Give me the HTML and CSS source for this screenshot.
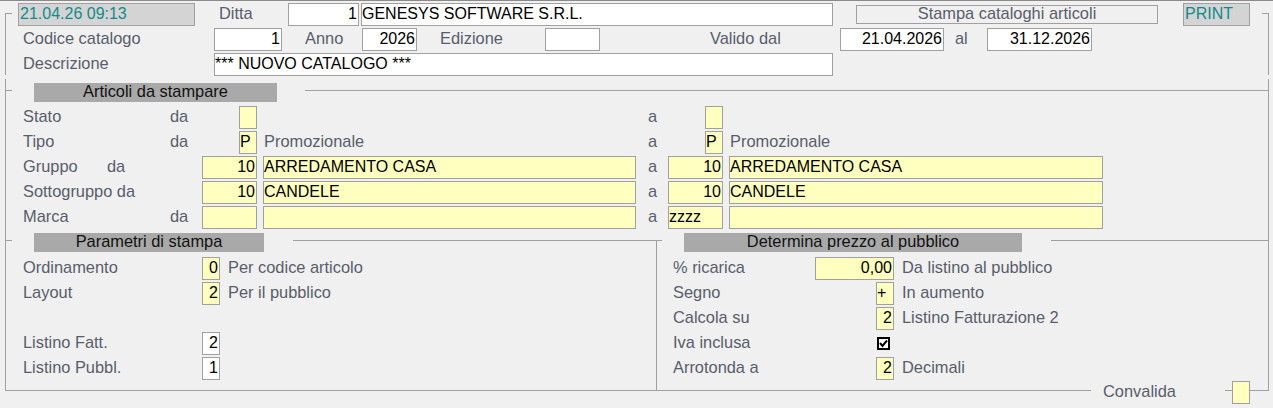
FILE: index.html
```html
<!DOCTYPE html>
<html lang="it">
<head>
    <meta charset="UTF-8">
    <meta name="viewport" content="width=device-width, initial-scale=1.0">
    <title>Stampa cataloghi articoli</title>
    <link rel="stylesheet" href="styles.css">
</head>
<body>
    <!-- Testata: ditta, catalogo, validita' -->
    <div class="testata">
        <div class="row">
            <div class="fld stamp w-stamp">21.04.26 09:13</div>
            <div class="lbl l-ditta">Ditta</div>
            <div class="fld num w-ditta">1</div>
            <div class="fld w-ragsoc">GENESYS SOFTWARE S.R.L.</div>
            <div class="banner">Stampa cataloghi articoli</div>
            <div class="fld stamp w-print">PRINT</div>
        </div>
        <div class="row">
            <div class="lbl l-first">Codice catalogo</div>
            <div class="fld num w-codcat">1</div>
            <div class="lbl l-anno">Anno</div>
            <div class="fld num w-anno">2026</div>
            <div class="lbl l-ediz">Edizione</div>
            <div class="fld w-anno"></div>
            <div class="lbl l-valido">Valido dal</div>
            <div class="fld num w-date">21.04.2026</div>
            <div class="lbl l-al">al</div>
            <div class="fld num w-date2">31.12.2026</div>
        </div>
        <div class="row">
            <div class="lbl l-first">Descrizione</div>
            <div class="fld w-descr">*** NUOVO CATALOGO ***</div>
        </div>
    </div>

    <div class="main">
        <!-- Selezione articoli -->
        <div class="group articoli">
            <div class="legend">
                <div class="legend-cover">
                    <div class="caption c-articoli">Articoli da stampare</div>
                </div>
            </div>
            <div class="rows">
                <div class="row">
                    <span class="lbl l-name">Stato</span><span class="lbl l-da">da</span>
                    <div class="code"><div class="fld yel small"></div></div>
                    <div class="desc"></div>
                    <span class="lbl l-a">a</span>
                    <div class="code"><div class="fld yel small"></div></div>
                    <div class="desc wide"></div>
                </div>
                <div class="row">
                    <span class="lbl l-name">Tipo</span><span class="lbl l-da">da</span>
                    <div class="code"><div class="fld yel small">P</div></div>
                    <div class="desc"><span class="lbl note">Promozionale</span></div>
                    <span class="lbl l-a">a</span>
                    <div class="code"><div class="fld yel small">P</div></div>
                    <div class="desc wide"><span class="lbl note">Promozionale</span></div>
                </div>
                <div class="row">
                    <span class="lbl l-name-short">Gruppo</span><span class="lbl l-da-long">da</span>
                    <div class="code"><div class="fld yel num full">10</div></div>
                    <div class="desc"><div class="fld yel full">ARREDAMENTO CASA</div></div>
                    <span class="lbl l-a">a</span>
                    <div class="code"><div class="fld yel num full">10</div></div>
                    <div class="desc wide"><div class="fld yel full">ARREDAMENTO CASA</div></div>
                </div>
                <div class="row">
                    <span class="lbl l-art">Sottogruppo da</span>
                    <div class="code"><div class="fld yel num full">10</div></div>
                    <div class="desc"><div class="fld yel full">CANDELE</div></div>
                    <span class="lbl l-a">a</span>
                    <div class="code"><div class="fld yel num full">10</div></div>
                    <div class="desc wide"><div class="fld yel full">CANDELE</div></div>
                </div>
                <div class="row">
                    <span class="lbl l-name">Marca</span><span class="lbl l-da">da</span>
                    <div class="code"><div class="fld yel full"></div></div>
                    <div class="desc"><div class="fld yel full"></div></div>
                    <span class="lbl l-a">a</span>
                    <div class="code"><div class="fld yel full">zzzz</div></div>
                    <div class="desc wide"><div class="fld yel full"></div></div>
                </div>
            </div>
        </div>

        <div class="split">
            <!-- Parametri di stampa -->
            <div class="group parametri">
                <div class="legend">
                    <div class="legend-cover">
                        <div class="caption c-parametri">Parametri di stampa</div>
                    </div>
                </div>
                <div class="rows">
                    <div class="row">
                        <span class="lbl l-art">Ordinamento</span>
                        <div class="fld yel num small">0</div>
                        <span class="lbl note after">Per codice articolo</span>
                    </div>
                    <div class="row">
                        <span class="lbl l-art">Layout</span>
                        <div class="fld yel num small">2</div>
                        <span class="lbl note after">Per il pubblico</span>
                    </div>
                    <div class="row"></div>
                    <div class="row">
                        <span class="lbl l-art">Listino Fatt.</span>
                        <div class="fld num small">2</div>
                    </div>
                    <div class="row">
                        <span class="lbl l-art">Listino Pubbl.</span>
                        <div class="fld num small">1</div>
                    </div>
                </div>
            </div>

            <!-- Determina prezzo al pubblico -->
            <div class="group prezzo">
                <div class="legend">
                    <div class="legend-cover cover-prezzo">
                        <div class="caption c-prezzo">Determina prezzo al pubblico</div>
                    </div>
                </div>
                <div class="rows">
                    <div class="row">
                        <span class="lbl l-det">% ricarica</span>
                        <div class="code-wide"><div class="fld yel num full">0,00</div></div>
                        <span class="lbl note after">Da listino al pubblico</span>
                    </div>
                    <div class="row">
                        <span class="lbl l-det">Segno</span>
                        <div class="code-wide"><div class="fld yel small">+</div></div>
                        <span class="lbl note after">In aumento</span>
                    </div>
                    <div class="row">
                        <span class="lbl l-det">Calcola su</span>
                        <div class="code-wide"><div class="fld yel num small">2</div></div>
                        <span class="lbl note after">Listino Fatturazione 2</span>
                    </div>
                    <div class="row">
                        <span class="lbl l-det">Iva inclusa</span>
                        <div class="code-wide">
                            <svg class="check" width="13" height="13" viewBox="0 0 13 13">
                                <rect x="1" y="1" width="11" height="11" fill="#fff" stroke="#000" stroke-width="2"/>
                                <polyline points="3,6 5.5,9 10,3.5" fill="none" stroke="#000" stroke-width="2"/>
                            </svg>
                        </div>
                    </div>
                    <div class="row">
                        <span class="lbl l-det">Arrotonda a</span>
                        <div class="code-wide"><div class="fld yel num small">2</div></div>
                        <span class="lbl note after">Decimali</span>
                    </div>
                </div>
            </div>
        </div>
    </div>

    <div class="footer">
        <div class="lbl conv-cover">Convalida</div>
        <div class="fld yel small conv-box"></div>
    </div>
</body>
</html>
```

FILE: styles.css
```css
* {
    box-sizing: border-box;
}
body {
    margin: 0;
    height: 408px;
    overflow: hidden;
    background: #f0f0f0;
    border-top: 1px solid #8a8a8a;
    font-family: "Liberation Sans", Arial, sans-serif;
    font-size: 16px;
    color: #000;
}
.row {
    display: flex;
    align-items: flex-start;
    height: 25px;
}
.lbl {
    flex: none;
    height: 23px;
    line-height: 21px;
    font-size: 16.4px;
    color: #585d6c;
    white-space: nowrap;
}
.fld {
    flex: none;
    height: 23px;
    line-height: 20px;
    border: 1px solid #a0a0a0;
    background: #fff;
    white-space: nowrap;
    overflow: hidden;
}
.fld.num {
    text-align: right;
    padding-right: 1px;
}
.fld.yel {
    background: #ffffc0;
}
.fld.small {
    width: 18px;
}
.fld.full {
    width: 100%;
}
.fld.stamp {
    background: #d4d4d4;
    color: #138a8a;
    padding-left: 1px;
}

/* testata */
.testata {
    height: 62px;
    margin: 12px 4px 0 5px;
    border: 1px solid #a0a0a0;
    border-bottom: none;
}
.testata .row {
    margin: 0 6px;
    background: #f0f0f0;
}
.testata .row:first-child {
    margin-top: -11px;
}
.w-stamp { width: 177px; margin-left: 6px; }
.w-ditta { width: 71px; }
.w-ragsoc { width: 472px; margin-left: 2px; }
.w-print { width: 67px; margin-left: 25px; }
.w-codcat { width: 68px; }
.w-anno { width: 55px; }
.w-date { width: 104px; }
.w-date2 { width: 105px; }
.w-descr { width: 619px; }
.l-ditta { width: 93px; padding-left: 24px; }
.l-first { width: 202px; padding-left: 11px; }
.l-anno { width: 80px; padding-left: 23px; }
.l-ediz { width: 128px; padding-left: 23px; }
.l-valido { width: 240px; padding-left: 110px; }
.l-al { width: 43px; padding-left: 11px; }
.banner {
    flex: none;
    width: 302px;
    height: 19px;
    margin: 2px 0 0 23px;
    border: 1px solid #a0a0a0;
    color: #585d6c;
    font-size: 16.4px;
    text-align: center;
    line-height: 15px;
}

/* riquadri */
.main {
    margin: 4px 4px 0 5px;
    padding-top: 11px;
    border: 1px solid #a0a0a0;
    border-top: none;
}
.group {
    border-top: 1px solid #a0a0a0;
}
.legend {
    display: flex;
    height: 19px;
    margin-top: -8px;
}
.legend-cover {
    margin-left: 6px;
    padding: 0 29px 0 22px;
    background: #f0f0f0;
}
.cover-prezzo {
    margin-left: 5px;
}
.caption {
    height: 19px;
    line-height: 17px;
    background: #a9a9a9;
    color: #111;
    font-size: 16.4px;
    text-align: center;
}
.c-articoli { width: 243px; }
.c-parametri { width: 230px; }
.c-prezzo { width: 338px; }
.articoli .legend-cover {
    padding-right: 28px;
}
.articoli {
    padding-bottom: 9px;
}
.articoli .rows {
    margin-top: 4px;
}
.split {
    display: flex;
}
.parametri {
    width: 651px;
    border-right: 1px solid #a0a0a0;
    padding-bottom: 8px;
}
.prezzo {
    flex: 1;
    padding-bottom: 8px;
}
.split .rows {
    margin-top: 5px;
}

/* righe articoli */
.l-name { width: 164px; padding-left: 17px; }
.l-da { width: 32px; }
.l-name-short { width: 101px; padding-left: 17px; }
.l-da-long { width: 95px; }
.l-art { width: 196px; padding-left: 17px; }
.l-a { width: 32px; padding-left: 12px; }
.l-det { width: 158px; padding-left: 16px; }
.code {
    display: flex;
    justify-content: flex-end;
    flex: none;
    width: 55px;
}
.code-wide {
    display: flex;
    justify-content: flex-end;
    flex: none;
    width: 79px;
}
.desc {
    flex: none;
    width: 373px;
    margin-left: 6px;
}
.desc.wide {
    width: 374px;
}
.note {
    padding-left: 1px;
}
.note.after {
    margin-left: 8px;
    padding-left: 0;
}
.check {
    display: block;
    margin: 5px 4px 0 0;
}

/* convalida */
.footer {
    display: flex;
    justify-content: flex-end;
    margin: -10px 23px 0 0;
}
.conv-cover {
    width: 134px;
    padding-left: 12px;
    background: #f0f0f0;
}
.conv-box {
    margin-left: 7px;
}
```
